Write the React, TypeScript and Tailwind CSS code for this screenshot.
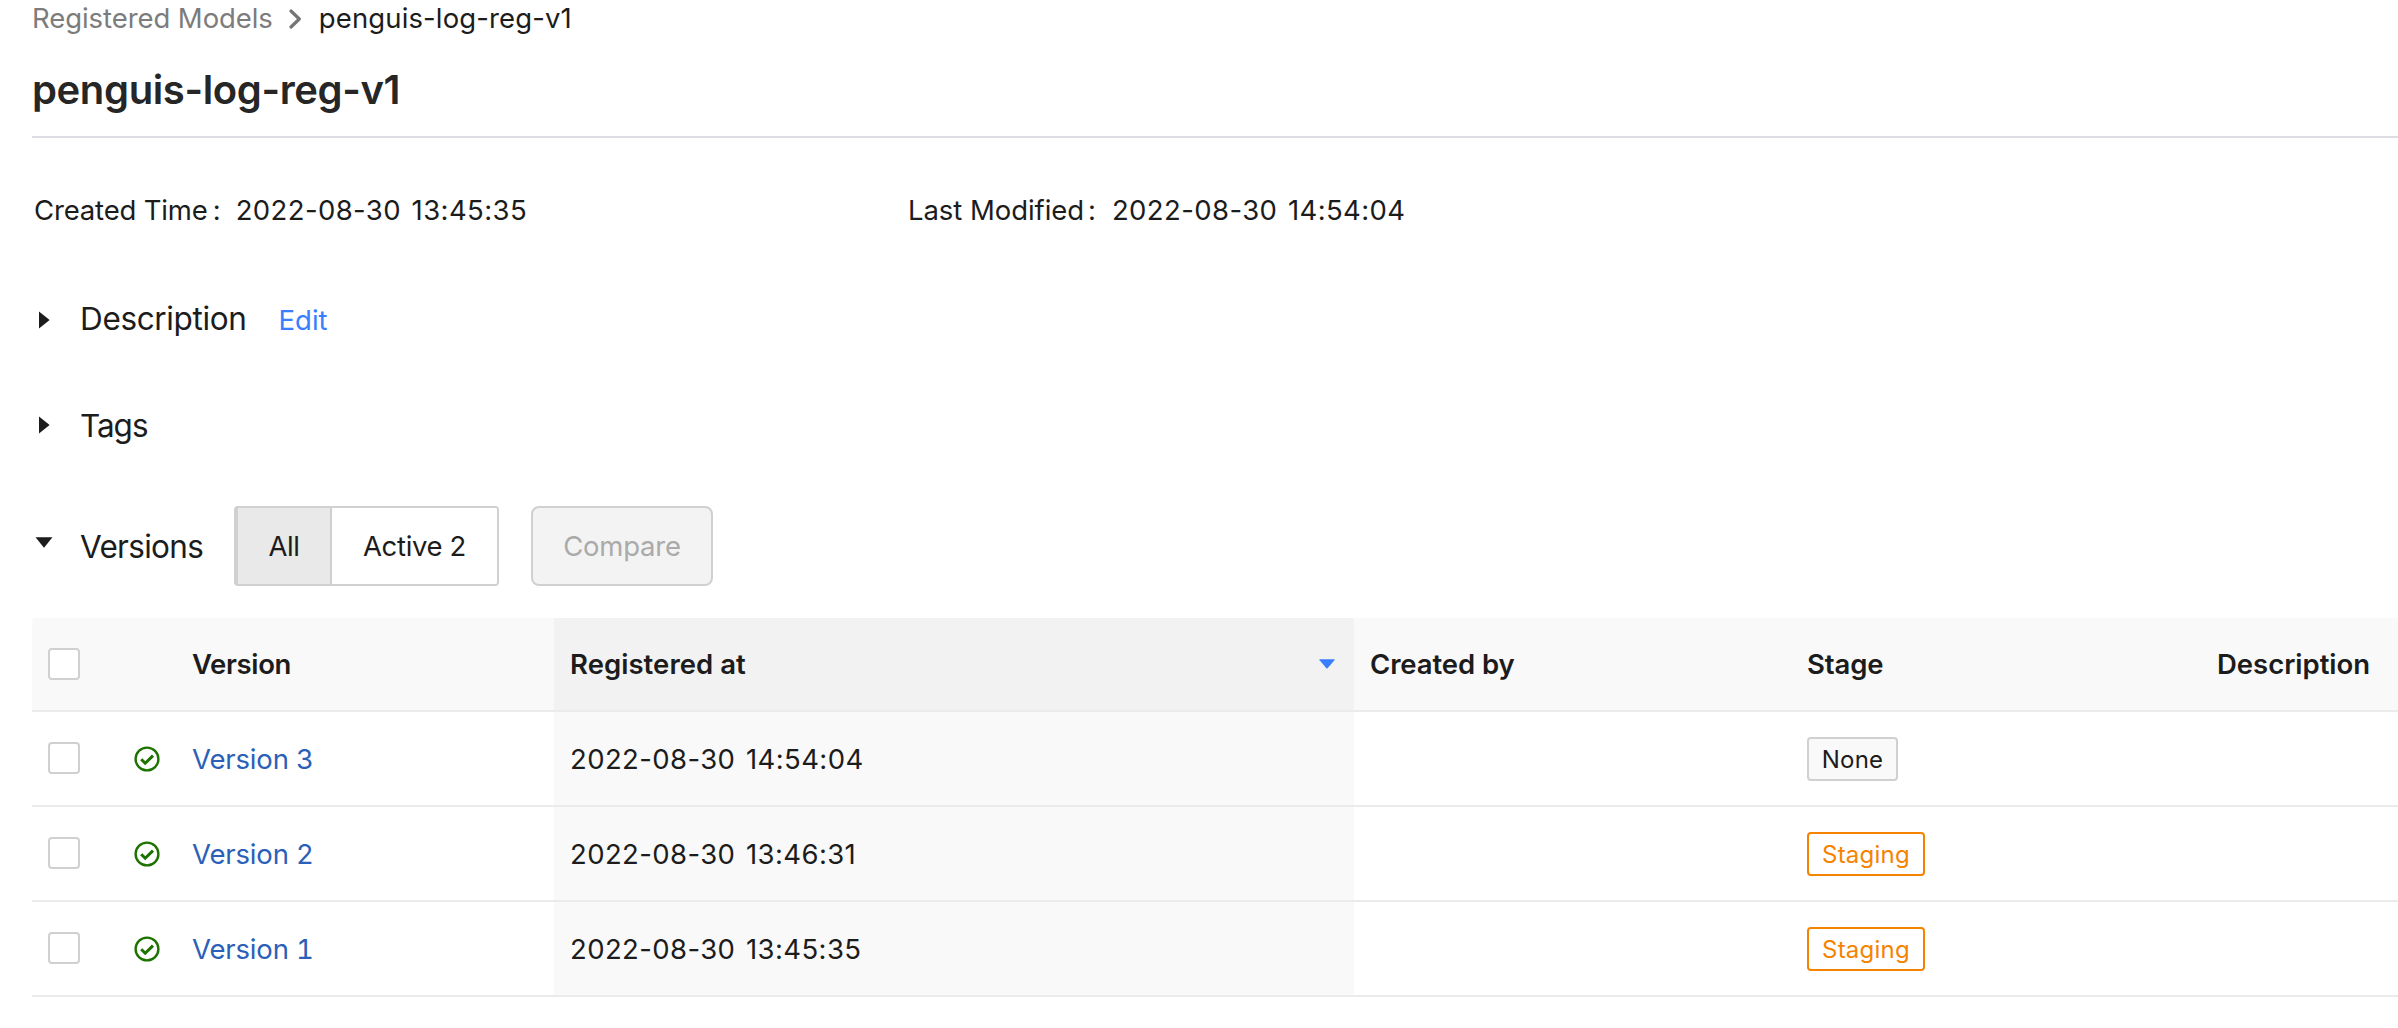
const versions = [
  { name: "Version 3", date: "2022-08-30 14:54:04", stage: "None" },
  { name: "Version 2", date: "2022-08-30 13:46:31", stage: "Staging" },
  { name: "Version 1", date: "2022-08-30 13:45:35", stage: "Staging" },
];

const columns =
  "grid grid-cols-[101px_59px_362px_800px_437px_410px_1fr] border-b-2 border-[#ebebeb]";

function ChevronRight() {
  return (
    <svg className="ml-[16px] mr-[17px] h-5 w-[13px]" viewBox="0 0 13 20" fill="none">
      <path
        d="M2 2L10.3 10L2 18"
        stroke="#757575"
        strokeWidth="3.2"
        strokeLinecap="round"
        strokeLinejoin="round"
      />
    </svg>
  );
}

function CaretRight({ className = "" }: { className?: string }) {
  return (
    <svg className={`ml-[7px] h-[18px] w-[11px] ${className}`} viewBox="0 0 11 18">
      <path d="M0 0.4V17.4L10.6 8.9Z" fill="#1c1c1c" />
    </svg>
  );
}

function CaretDown() {
  return (
    <svg className="-mt-2 ml-[3px] h-[11px] w-[18px]" viewBox="0 0 18 11">
      <path d="M0.5 0.3H17.5L9 10.8Z" fill="#1c1c1c" />
    </svg>
  );
}

function SortDown() {
  return (
    <svg className="h-[10px] w-[16px]" viewBox="0 0 16 10">
      <path d="M0.9 0.3H15.1Q16 0.4 15.4 1.3L8.6 9.2Q8 9.8 7.4 9.2L0.6 1.3Q0 0.4 0.9 0.3Z" fill="#3a7dff" />
    </svg>
  );
}

function CheckCircle() {
  return (
    <svg className="h-7 w-7" viewBox="0 0 28 28" fill="none" stroke="#1c7300">
      <circle cx="14" cy="14" r="11.4" strokeWidth="2.4" />
      <path d="M8.2 14.2L12.2 18.2L20 10.6" strokeWidth="3" />
    </svg>
  );
}

function Checkbox({ className = "" }: { className?: string }) {
  return (
    <span className={`ml-4 block size-8 rounded-[4px] border-2 border-[#d0d0d0] bg-white ${className}`} />
  );
}

function StageTag({ stage }: { stage: string }) {
  return stage === "None" ? (
    <span className="flex h-11 w-[91px] items-center justify-center rounded-[4px] border-2 border-[#d0d0d0] bg-[#f9f9f9] pt-px text-[24px] tracking-[0.2px]">
      {stage}
    </span>
  ) : (
    <span className="flex h-11 w-[118px] items-center justify-center rounded-[4px] border-2 border-[#f58300] bg-white pt-px text-[24px] tracking-[0.25px] text-[#f58300]">
      {stage}
    </span>
  );
}

function Timestamp({ value }: { value: string }) {
  return <span className="tracking-[0.4px] [word-spacing:2.5px]">{value}</span>;
}

export default function App() {
  return (
    <main className="h-[1028px] w-full overflow-hidden bg-white pl-8 font-['Inter',sans-serif] text-[27.5px] text-[#1c1c1c]">
      <nav className="flex h-[37px] items-center whitespace-nowrap">
        <span className="tracking-[-0.07px] text-[#7c7c7c]">Registered Models</span>
        <ChevronRight />
        <span className="tracking-[0.12px]">penguis-log-reg-v1</span>
      </nav>

      <h1 className="border-b-2 border-[#dcdce2] pt-[29px] pb-[22px] text-[40px] leading-[48px] font-semibold tracking-[-0.37px] text-[#262626]">
        penguis-log-reg-v1
      </h1>

      <section className="mt-[51px] mb-[62px] grid h-11 grid-cols-[874px_1fr] items-center pl-0.5 whitespace-nowrap">
        <div className="flex">
          <span className="tracking-[-0.16px]">Created Time</span>
          <span className="ml-[5px] mr-[15px]">:</span>
          <Timestamp value="2022-08-30 13:45:35" />
        </div>
        <div className="flex">
          <span className="tracking-[-0.06px]">Last Modified</span>
          <span className="ml-[4px] mr-[16px]">:</span>
          <Timestamp value="2022-08-30 14:54:04" />
        </div>
      </section>

      <section className="flex h-12 items-center">
        <div className="w-12">
          <CaretRight className="mt-px" />
        </div>
        <div className="flex items-baseline">
          <h2 className="text-[31.5px] leading-[48px] tracking-[-0.35px]">Description</h2>
          <a className="ml-[32px] text-[#3a7dff]">Edit</a>
        </div>
      </section>

      <section className="mt-[59px] flex h-12 items-center">
        <div className="w-12">
          <CaretRight className="-mt-0.5" />
        </div>
        <h2 className="text-[31.5px] leading-[48px] tracking-[-1.05px]">Tags</h2>
      </section>

      <section className="mt-[56px] flex h-20 items-center">
        <div className="w-12">
          <CaretDown />
        </div>
        <h2 className="w-[154px] pt-px text-[31.5px] leading-[48px] tracking-[-0.7px]">Versions</h2>
        <div className="flex h-20 w-[265px] overflow-hidden rounded-[4px] border-2 border-l-4 border-[#d0d0d0]">
          <button className="w-[94px] border-r-2 border-[#d0d0d0] bg-[#e9e9e9] pt-px tracking-[-0.4px]">All</button>
          <button className="flex-1 bg-white pt-px tracking-[-0.35px]">Active 2</button>
        </div>
        <button className="ml-8 h-20 w-[182px] rounded-lg border-2 border-[#d0d0d0] bg-[#f3f3f3] pt-px tracking-[-0.2px] text-[#aaaaaa]">
          Compare
        </button>
      </section>

      <section className="mt-8 whitespace-nowrap">
        <div className={`${columns} h-[94px] rounded-tl-[4px] bg-[#f9f9f9] font-semibold`}>
          <div className="flex items-center">
            <Checkbox />
          </div>
          <div />
          <div className="flex items-center pt-px tracking-[-0.35px]">Version</div>
          <div className="flex items-center justify-between bg-[#f2f2f2] pr-[19px] pl-4">
            <span className="pt-px tracking-[0.05px]">Registered at</span>
            <SortDown />
          </div>
          <div className="flex items-center pt-px pl-4 tracking-[-0.1px]">Created by</div>
          <div className="flex items-center pt-px pl-4 tracking-[-0.1px]">Stage</div>
          <div className="flex items-center pt-px pl-4 tracking-[-0.02px]">Description</div>
        </div>
        {versions.map((v) => (
          <div key={v.name} className={`${columns} h-[95px]`}>
            <div className="flex items-center">
              <Checkbox className="-mt-0.5" />
            </div>
            <div className="flex items-center pt-px">
              <CheckCircle />
            </div>
            <div className="flex items-center pt-0.5 tracking-[-0.16px] text-[#2a60b8] tabular-nums">{v.name}</div>
            <div className="flex items-center bg-[#f9f9f9] pt-0.5 pl-4">
              <Timestamp value={v.date} />
            </div>
            <div />
            <div className="flex items-center pt-px pl-4">
              <StageTag stage={v.stage} />
            </div>
            <div />
          </div>
        ))}
      </section>
    </main>
  );
}
